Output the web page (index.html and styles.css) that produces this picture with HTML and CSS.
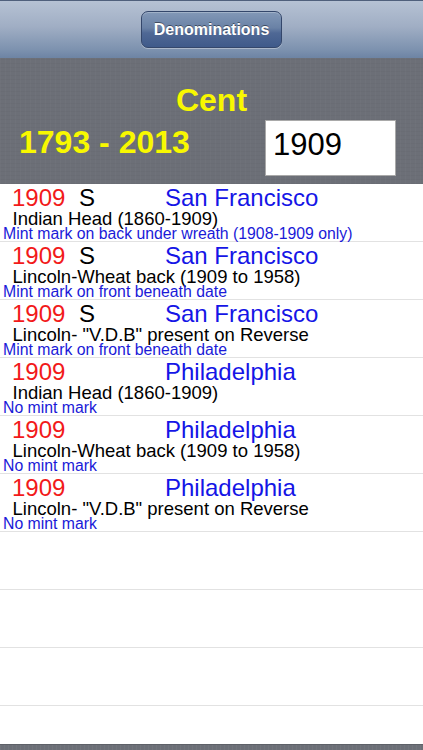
FILE: index.html
```html
<!DOCTYPE html>
<html>
<head>
<meta charset="utf-8">
<link rel="stylesheet" href="styles.css">
</head>
<body>
<div class="screen">
  <header class="navbar">
    <div class="nav-button">Denominations</div>
  </header>
  <section class="hero">
    <div class="title">Cent</div>
    <div class="hero-row">
      <div class="range">1793 - 2013</div>
      <div class="year-box">1909</div>
    </div>
  </section>
  <div class="list">
    <div class="row">
      <div class="line1"><span class="year">1909</span><span class="mint">S</span><span class="city">San Francisco</span></div>
      <div class="line2">Indian Head (1860-1909)</div>
      <div class="line3">Mint mark on back under wreath (1908-1909 only)</div>
    </div>
    <div class="row">
      <div class="line1"><span class="year">1909</span><span class="mint">S</span><span class="city">San Francisco</span></div>
      <div class="line2">Lincoln-Wheat back (1909 to 1958)</div>
      <div class="line3">Mint mark on front beneath date</div>
    </div>
    <div class="row">
      <div class="line1"><span class="year">1909</span><span class="mint">S</span><span class="city">San Francisco</span></div>
      <div class="line2">Lincoln- "V.D.B" present on Reverse</div>
      <div class="line3">Mint mark on front beneath date</div>
    </div>
    <div class="row">
      <div class="line1"><span class="year">1909</span><span class="mint"></span><span class="city">Philadelphia</span></div>
      <div class="line2">Indian Head (1860-1909)</div>
      <div class="line3">No mint mark</div>
    </div>
    <div class="row">
      <div class="line1"><span class="year">1909</span><span class="mint"></span><span class="city">Philadelphia</span></div>
      <div class="line2">Lincoln-Wheat back (1909 to 1958)</div>
      <div class="line3">No mint mark</div>
    </div>
    <div class="row">
      <div class="line1"><span class="year">1909</span><span class="mint"></span><span class="city">Philadelphia</span></div>
      <div class="line2">Lincoln- "V.D.B" present on Reverse</div>
      <div class="line3">No mint mark</div>
    </div>
    <div class="row empty"></div>
    <div class="row empty"></div>
    <div class="row empty"></div>
    <div class="row empty"></div>
  </div>
  <footer class="bottom-bar"></footer>
</div>
</body>
</html>
```

FILE: styles.css
```css
html, body {
  margin: 0;
  padding: 0;
  background: #ffffff;
  overflow: hidden;
}

.screen {
  width: 423px;
  height: 750px;
  display: flex;
  flex-direction: column;
  font-family: "Liberation Sans", Arial, Helvetica, sans-serif;
  overflow: hidden;
}

.navbar {
  height: 58px;
  box-sizing: border-box;
  border-top: 1px solid #50607c;
  background: linear-gradient(to bottom, #b6c2d4 0%, #a0aec4 45%, #7d92af 85%, #6d84a4 100%);
  display: flex;
  justify-content: center;
  align-items: flex-start;
  padding-top: 10px;
  flex-shrink: 0;
}

.nav-button {
  width: 141px;
  height: 37px;
  box-sizing: border-box;
  border: 1px solid #34476b;
  border-radius: 7px;
  background: linear-gradient(to bottom, #8298b7 0%, #6a82a6 45%, #4f6895 60%, #3f5a8a 100%);
  box-shadow: inset 0 1px 0 rgba(255,255,255,0.25), 0 1px 0 rgba(255,255,255,0.35);
  color: #ffffff;
  font-weight: bold;
  font-size: 16px;
  line-height: 35px;
  text-align: center;
  text-shadow: 0 -1px 0 rgba(0,0,0,0.45);
}

.hero {
  height: 126px;
  box-sizing: border-box;
  padding-top: 22px;
  flex-shrink: 0;
  background-color: #6c6f77;
  background-image:
    repeating-linear-gradient(90deg, rgba(255,255,255,0.02) 0px, rgba(255,255,255,0.02) 1px, rgba(0,0,0,0) 1px, rgba(0,0,0,0) 5px),
    repeating-linear-gradient(0deg, rgba(0,0,0,0.025) 0px, rgba(0,0,0,0.025) 1px, rgba(0,0,0,0) 1px, rgba(0,0,0,0) 4px);
}

.title {
  color: #f8f800;
  font-weight: bold;
  font-size: 32px;
  line-height: 40px;
  text-align: center;
}

.hero-row {
  display: flex;
  justify-content: space-between;
  align-items: flex-start;
  padding-left: 19px;
  padding-right: 27px;
}

.range {
  margin-top: 6px;
  color: #f8f800;
  font-weight: bold;
  font-size: 32px;
  line-height: 32px;
}

.year-box {
  width: 131px;
  height: 56px;
  box-sizing: border-box;
  border: 1px solid #a9a9a9;
  background: #ffffff;
  color: #000000;
  font-size: 31px;
  line-height: 35px;
  padding-top: 5.5px;
  padding-left: 7px;
}

.list {
  height: 560px;
  overflow: hidden;
  flex-shrink: 0;
  background: #ffffff;
}

.row {
  height: 58px;
  box-sizing: border-box;
  border-bottom: 1px solid #e2e2e2;
  padding-top: 2px;
}

.line1 {
  display: flex;
  font-size: 24px;
  line-height: 24px;
  padding-left: 12px;
  white-space: nowrap;
}

.year {
  width: 67px;
  color: #f21a1a;
}

.mint {
  width: 86px;
  color: #000000;
}

.city {
  color: #1515e6;
}

.line2 {
  font-size: 18.5px;
  line-height: 17px;
  padding-left: 12.5px;
  color: #000000;
  white-space: nowrap;
}

.line3 {
  font-size: 15.8px;
  line-height: 14px;
  padding-left: 3px;
  color: #1a1ad8;
  white-space: nowrap;
}

.bottom-bar {
  flex: 1;
  background-color: #6c6f77;
  background-image:
    repeating-linear-gradient(90deg, rgba(255,255,255,0.04) 0px, rgba(255,255,255,0.04) 1px, rgba(0,0,0,0) 1px, rgba(0,0,0,0) 4px);
  border-top: 1px solid #5e6168;
}
```
